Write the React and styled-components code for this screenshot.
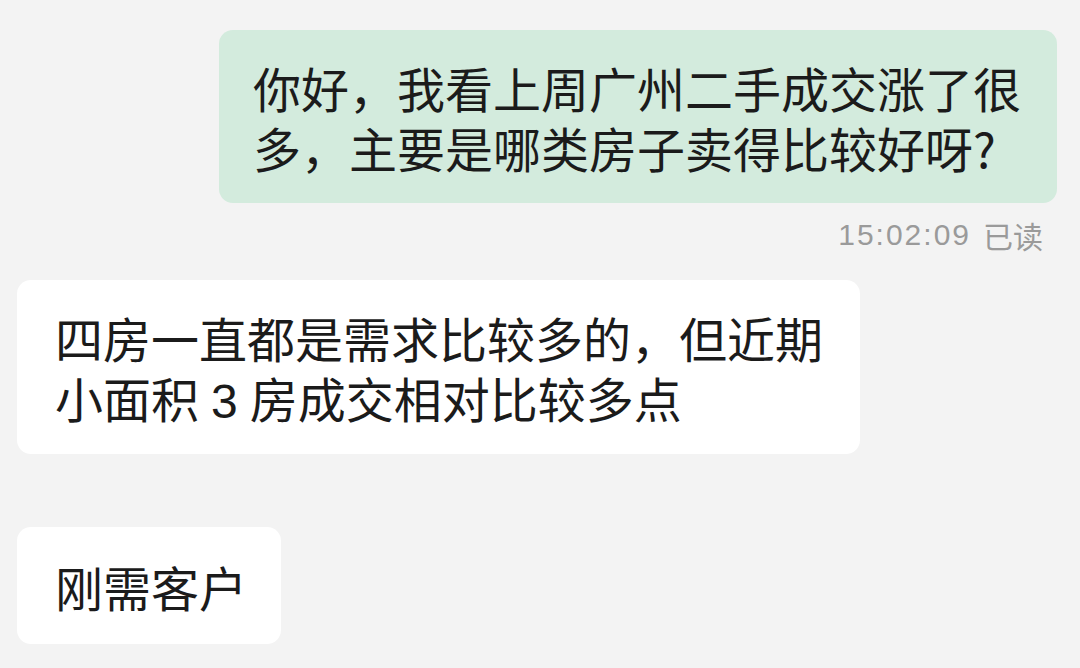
import React from 'react';
import styled, { createGlobalStyle } from 'styled-components';

const GlobalStyle = createGlobalStyle`
  html, body {
    margin: 0;
    padding: 0;
    background: #f3f3f3;
  }
  body {
    font-family: "Noto Sans CJK SC", "Noto Sans", sans-serif;
    color: #1b1b1b;
  }
`;

const Page = styled.div`
  width: 1080px;
  height: 668px;
  overflow: hidden;
  background: #f3f3f3;
  display: flex;
  flex-direction: column;
  padding: 30px 23px 0 17px;
  box-sizing: border-box;
`;

const Row = styled.div`
  display: flex;
  flex-direction: column;
  align-items: ${p => (p.$mine ? 'flex-end' : 'flex-start')};
  margin-top: ${p => p.$top || 0}px;
`;

const Bubble = styled.div`
  background: ${p => (p.$mine ? '#d3ebdd' : '#ffffff')};
  border-radius: 14px;
  padding: ${p => p.$pad};
  font-size: 48px;
  line-height: 60px;
  white-space: nowrap;
  width: ${p => p.$width}px;
  box-sizing: border-box;
`;

const Num = styled.span`
  font-family: "Liberation Sans", "Noto Sans", sans-serif;
  line-height: 1;
  margin: 0 12px;
`;

const Meta = styled.div`
  margin-top: 12px;
  margin-right: 14px;
  font-size: 30px;
  line-height: 40px;
  color: #9a9a9a;
  display: flex;
  align-items: center;
  gap: 12px;
`;

const Time = styled.span`
  font-family: "Liberation Sans", "Noto Sans", sans-serif;
  letter-spacing: 2px;
`;

export default function App() {
  return (
    <>
      <GlobalStyle />
      <Page>
        <Row $mine>
          <Bubble $mine $width={838} $pad="27px 36px 26px 34px">
            你好，我看上周广州二手成交涨了很
            <br />
            多，主要是哪类房子卖得比较好呀?
          </Bubble>
          <Meta>
            <Time>15:02:09</Time>
            <span>已读</span>
          </Meta>
        </Row>
        <Row $top={25}>
          <Bubble $width={843} $pad="27px 40px 27px 38px">
            四房一直都是需求比较多的，但近期
            <br />
            小面积<Num>3</Num>房成交相对比较多点
          </Bubble>
        </Row>
        <Row $top={73}>
          <Bubble $width={264} $pad="29px 34px 28px 38px">
            刚需客户
          </Bubble>
        </Row>
      </Page>
    </>
  );
}
